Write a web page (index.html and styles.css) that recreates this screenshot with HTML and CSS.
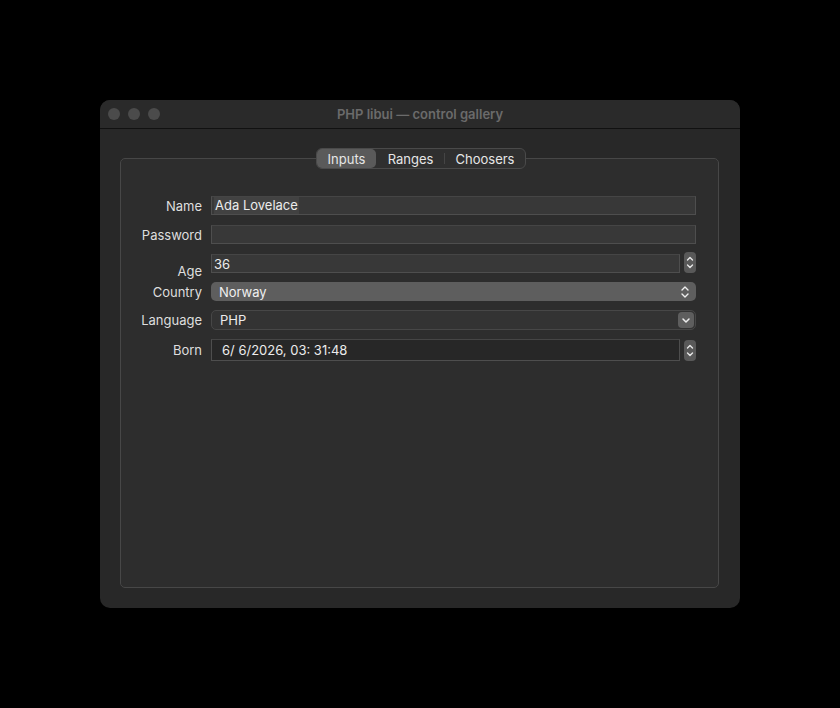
FILE: index.html
```html
<!DOCTYPE html>
<html lang="en">
<head>
  <meta charset="UTF-8" />
  <title>PHP libui — control gallery</title>
  <link rel="stylesheet" href="styles.css">
</head>
<body>

  <div class="window">
    <div class="titlebar">
      <div class="lights">
        <span class="light"></span>
        <span class="light"></span>
        <span class="light"></span>
      </div>
      <div class="title">PHP libui — control gallery</div>
    </div>

    <div class="content">
      <div class="tabs">
        <span class="tab active">Inputs</span>
        <span class="tab">Ranges</span>
        <span class="tab divided">Choosers</span>
      </div>

      <div class="group">
        <div class="row">
          <label>Name</label>
          <div class="field"><span class="sel">Ada Lovelace</span></div>
        </div>
        <div class="row">
          <label>Password</label>
          <div class="field"></div>
        </div>
        <div class="row row-age">
          <label>Age</label>
          <div class="field">36</div>
          <div class="stepper">
            <svg width="12" height="21" viewBox="0 0 12 21"><path d="M3.5 8 L6 5.5 L8.5 8 M3.5 13 L6 15.5 L8.5 13" fill="none" stroke="#e8e8e8" stroke-width="1.4" stroke-linecap="round" stroke-linejoin="round"/></svg>
          </div>
        </div>
        <div class="row row-country">
          <label>Country</label>
          <div class="popup">
            <span>Norway</span>
            <svg width="10" height="14" viewBox="0 0 10 14"><path d="M2 5 L5 2 L8 5 M2 9 L5 12 L8 9" fill="none" stroke="#eeeeee" stroke-width="1.4" stroke-linecap="round" stroke-linejoin="round"/></svg>
          </div>
        </div>
        <div class="row">
          <label>Language</label>
          <div class="combo">
            <span>PHP</span>
            <span class="arrow">
              <svg width="16" height="16" viewBox="0 0 16 16"><path d="M5 7 L8 10 L11 7" fill="none" stroke="#eeeeee" stroke-width="1.5" stroke-linecap="round" stroke-linejoin="round"/></svg>
            </span>
          </div>
        </div>
        <div class="row row-born">
          <label>Born</label>
          <div class="field date">6/ 6/2026, 03: 31:48</div>
          <div class="stepper">
            <svg width="12" height="21" viewBox="0 0 12 21"><path d="M3.5 8 L6 5.5 L8.5 8 M3.5 13 L6 15.5 L8.5 13" fill="none" stroke="#e8e8e8" stroke-width="1.4" stroke-linecap="round" stroke-linejoin="round"/></svg>
          </div>
        </div>
      </div>
    </div>
  </div>

</body>
</html>
```

FILE: styles.css
```css
body {
  margin: 0;
  padding: 0;
  background: #000;
  font-family: Inter, 'Noto Sans', sans-serif;
  font-size: 13px;
  color: #e4e4e4;
}

.window {
  margin: 100px 0 0 100px;
  width: 640px;
  height: 508px;
  background: #282828;
  border-radius: 10px;
  overflow: hidden;
  display: flex;
  flex-direction: column;
}

.titlebar {
  height: 28px;
  background: #2a2a2a;
  border-bottom: 1px solid #111;
  display: flex;
  align-items: center;
  position: relative;
}

.lights {
  display: flex;
  gap: 8px;
  padding-left: 8px;
}

.light {
  width: 12px;
  height: 12px;
  border-radius: 50%;
  background: #4b4b4b;
}

.title {
  position: absolute;
  left: 0;
  right: 0;
  text-align: center;
  font-weight: 600;
  color: #6b6b6b;
  pointer-events: none;
}

.content {
  flex: 1;
  padding: 19px 21px 20px 20px;
  display: flex;
  flex-direction: column;
}

.tabs {
  align-self: center;
  margin-left: 3px;
  display: flex;
  height: 19px;
  background: #2f2f2f;
  border: 1px solid #4a4a4a;
  border-radius: 6px;
  margin-bottom: -11px;
  position: relative;
  z-index: 1;
}

.tab {
  display: flex;
  align-items: center;
  justify-content: center;
  padding: 0 11px;
  color: #e6e6e6;
  border-radius: 5px;
}

.tab.active {
  background: #5a5a5a;
}

.tab:nth-child(1) { width: 37px; }
.tab:nth-child(2) { width: 45px; padding: 0 11px 0 12px; }
.tab:nth-child(3) { width: 58px; }

.tab.divided {
  border-left: 1px solid #454545;
  border-radius: 0 5px 5px 0;
  height: 11px;
  align-self: center;
}

.group {
  flex: 1;
  background: #2d2d2d;
  border: 1px solid #474747;
  border-radius: 5px;
  padding: 37px 22px 0 0;
  display: flex;
  flex-direction: column;
}

.row {
  display: flex;
  align-items: center;
  height: 19px;
  margin-bottom: 10px;
}

.row label {
  width: 81px;
  text-align: right;
  margin-right: 9px;
  color: #dedede;
}

.field {
  flex: 1;
  height: 17px;
  background: #383838;
  border: 1px solid #4e4e4e;
  border-top-color: #454545;
  display: flex;
  align-items: center;
  padding: 0 2px;
  color: #ececec;
}

.sel {
  background: #424242;
  padding: 0 1px;
  line-height: 17px;
}

.row-age {
  align-items: flex-start;
  margin-bottom: 9px;
}

.row-age label {
  align-self: flex-end;
  margin-bottom: -6px;
}

.row-country {
  margin-bottom: 9px;
}

.stepper {
  width: 12px;
  height: 21px;
  margin-left: 4px;
  margin-top: -2px;
  background: #595959;
  border-radius: 4px;
  display: flex;
}

.popup {
  flex: 1;
  height: 19px;
  background: #5e5e5e;
  border-radius: 5px;
  display: flex;
  align-items: center;
  justify-content: space-between;
  padding: 0 6px 0 8px;
  color: #f0f0f0;
}

.combo {
  flex: 1;
  height: 18px;
  background: #333;
  border: 1px solid #474747;
  border-radius: 5px;
  display: flex;
  align-items: center;
  justify-content: space-between;
  padding: 0 1px 0 8px;
  color: #ececec;
}

.arrow {
  width: 16px;
  height: 16px;
  background: #5e5e5e;
  border-radius: 4px;
  display: flex;
}

.row-born {
  height: 22px;
}

.row-born .field {
  height: 20px;
  background: #272727;
  padding-left: 10px;
}

.row-born .stepper {
  margin-top: 0;
}
```
